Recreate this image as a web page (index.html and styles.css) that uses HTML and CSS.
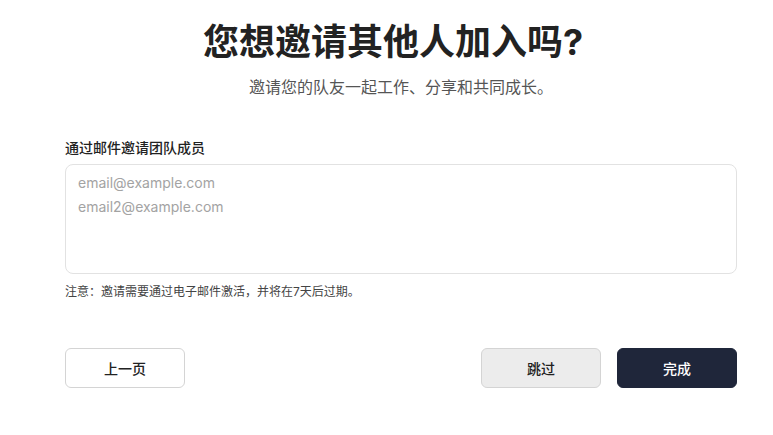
FILE: index.html
```html
<!DOCTYPE html>
<html lang="zh">
<head>
<meta charset="utf-8">
<link rel="stylesheet" href="styles.css">
</head>
<body>
<main class="page">
  <h1 class="title">您想邀请其他人加入吗?</h1>
  <p class="subtitle">邀请您的队友一起工作、分享和共同成长。</p>
  <label class="label" for="emails">通过邮件邀请团队成员</label>
  <textarea id="emails" class="emails" placeholder="email@example.com&#10;email2@example.com"></textarea>
  <p class="note">注意：邀请需要通过电子邮件激活，并将在7天后过期。</p>
  <div class="actions">
    <button class="btn btn-outline">上一页</button>
    <div class="right">
      <button class="btn btn-gray">跳过</button>
      <button class="btn btn-dark">完成</button>
    </div>
  </div>
</main>
</body>
</html>
```
FILE: styles.css
```css
* { box-sizing: border-box; }
html, body { margin: 0; background: #fff; }
body {
  font-family: "Inter", "Noto Sans CJK SC", sans-serif;
  color: #222;
}
.page {
  width: 672px;
  margin-left: 65px;
  padding-top: 22px;
  display: flex;
  flex-direction: column;
}
.title {
  margin: 0;
  padding-right: 16px;
  text-align: center;
  font-size: 36px;
  line-height: 40px;
  font-weight: 700;
  color: #222;
}
.subtitle {
  margin: 13px 0 0;
  text-align: center;
  font-size: 16px;
  line-height: 24px;
  color: #555;
}
.label {
  margin-top: 39px;
  font-size: 14px;
  line-height: 20px;
  font-weight: 500;
  color: #222;
}
.emails {
  margin-top: 6px;
  height: 110px;
  width: 100%;
  resize: none;
  border: 1px solid #e2e2e2;
  border-radius: 8px;
  padding: 6px 12px;
  font-family: "Inter", "Noto Sans CJK SC", sans-serif;
  font-size: 14px;
  line-height: 24px;
  color: #222;
  outline: none;
}
.emails::placeholder { color: #a3a3a3; }
.note {
  margin: 10px 0 0;
  font-size: 12px;
  line-height: 16px;
  color: #444;
}
.actions {
  margin-top: 48px;
  display: flex;
  justify-content: space-between;
}
.right { display: flex; gap: 16px; }
.btn {
  width: 120px;
  height: 40px;
  border-radius: 6px;
  font-family: "Inter", "Noto Sans CJK SC", sans-serif;
  font-size: 14px;
  font-weight: 500;
  cursor: pointer;
}
.btn-outline { background: #fff; border: 1px solid #d4d4d4; color: #222; }
.btn-gray { background: #ececec; border: 1px solid #d4d4d4; color: #222; }
.btn-dark { background: #1f263a; border: 1px solid #1f263a; color: #fff; }
```
